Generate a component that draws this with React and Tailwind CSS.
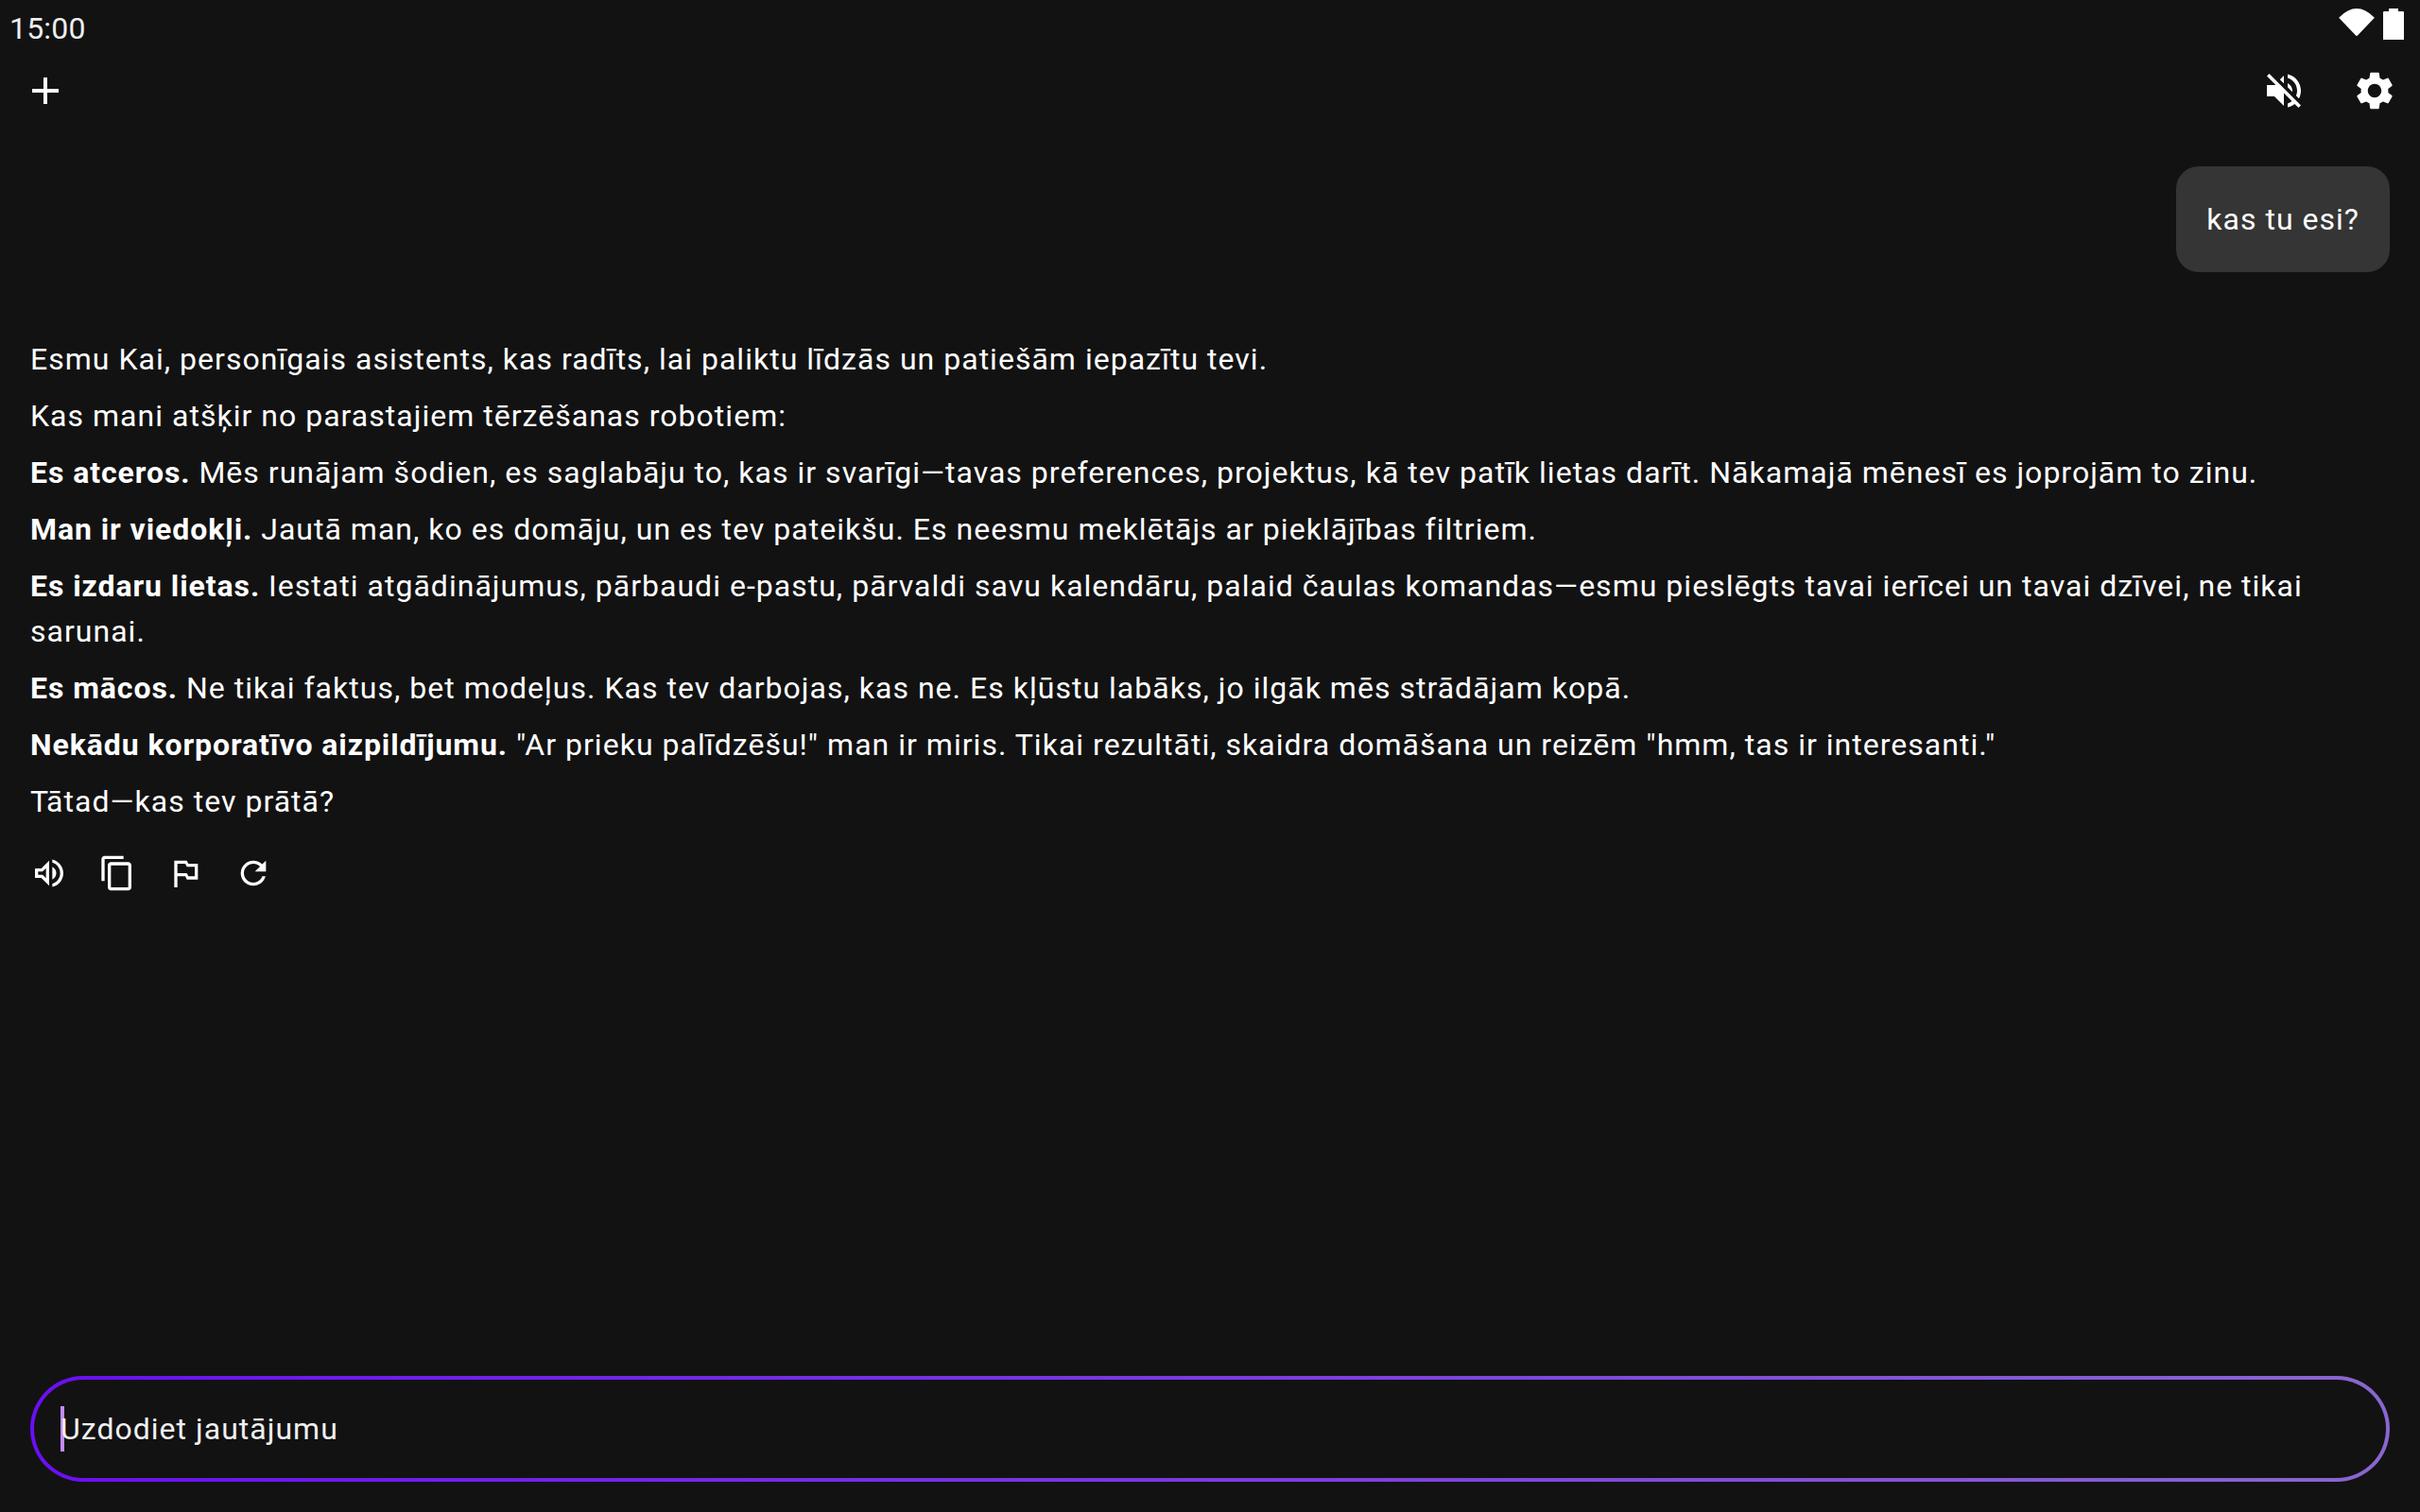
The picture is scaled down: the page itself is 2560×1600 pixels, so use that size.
import React from "react";

const Icon = ({ d, className = "w-12 h-12" }) => (
  <svg viewBox="0 0 24 24" fill="currentColor" className={className}>
    <path d={d} />
  </svg>
);

const paths = {
  add: "M19 13h-6v6h-2v-6H5v-2h6V5h2v6h6v2z",
  muted: "M16.5 12c0-1.77-1.02-3.29-2.5-4.03v2.21l2.45 2.45c.03-.2.05-.41.05-.63zm2.5 0c0 .94-.2 1.82-.54 2.64l1.51 1.51C20.63 14.91 21 13.5 21 12c0-4.28-2.99-7.86-7-8.77v2.06c2.89.86 5 3.54 5 6.71zM4.27 3L3 4.27 7.73 9H3v6h4l5 5v-6.73l4.25 4.25c-.67.52-1.42.93-2.25 1.18v2.06c1.38-.31 2.63-.95 3.69-1.81L19.73 21 21 19.73l-9-9L4.27 3zM12 4L9.91 6.09 12 8.18V4z",
  settings: "M19.14 12.94c.04-.3.06-.61.06-.94 0-.32-.02-.64-.07-.94l2.03-1.58c.18-.14.23-.41.12-.61l-1.92-3.32c-.12-.22-.37-.29-.59-.22l-2.39.96c-.5-.38-1.03-.7-1.62-.94l-.36-2.54c-.04-.24-.24-.41-.48-.41h-3.84c-.24 0-.43.17-.47.41l-.36 2.54c-.59.24-1.13.57-1.62.94l-2.39-.96c-.22-.08-.47 0-.59.22L2.74 8.87c-.12.21-.08.47.12.61l2.03 1.58c-.05.3-.09.63-.09.94s.02.64.07.94l-2.03 1.58c-.18.14-.23.41-.12.61l1.92 3.32c.12.22.37.29.59.22l2.39-.96c.5.38 1.03.7 1.62.94l.36 2.54c.05.24.24.41.48.41h3.84c.24 0 .44-.17.47-.41l.36-2.54c.59-.24 1.13-.56 1.62-.94l2.39.96c.22.08.47 0 .59-.22l1.92-3.32c.12-.22.07-.47-.12-.61l-2.01-1.58zM12 15.6c-1.98 0-3.6-1.62-3.6-3.6s1.62-3.6 3.6-3.6 3.6 1.62 3.6 3.6-1.62 3.6-3.6 3.6z",
  volume: "M3 9v6h4l5 5V4L7 9H3zm7-.17v6.34L7.83 13H5v-2h2.83L10 8.83zM16.5 12c0-1.77-1.02-3.29-2.5-4.03v8.05c1.48-.73 2.5-2.25 2.5-4.02zM14 3.23v2.06c2.89.86 5 3.54 5 6.71s-2.11 5.85-5 6.71v2.06c4.01-.91 7-4.49 7-8.77 0-4.28-2.99-7.86-7-8.77z",
  copy: "M16 1H4c-1.1 0-2 .9-2 2v14h2V3h12V1zm3 4H8c-1.1 0-2 .9-2 2v14c0 1.1.9 2 2 2h11c1.1 0 2-.9 2-2V7c0-1.1-.9-2-2-2zm0 16H8V7h11v14z",
  flag: "M14 6l-1-2H5v17h2v-7h5l1 2h7V6h-6zm4 8h-4l-1-2H7V6h5l1 2h5v6z",
  refresh: "M17.65 6.35C16.2 4.9 14.21 4 12 4c-4.42 0-7.99 3.58-7.99 8s3.57 8 7.99 8c3.73 0 6.84-2.55 7.73-6h-2.08c-.82 2.33-3.04 4-5.65 4-3.31 0-6-2.69-6-6s2.69-6 6-6c1.66 0 3.14.69 4.22 1.78L13 11h7V4l-2.35 2.35z",
};

const StatusBar = () => (
  <div className="h-[72px] flex items-start justify-between pl-[10px] pr-[17px] pt-[9px]">
    <span className="text-[32px] leading-[42px] tracking-[0.2px] text-[#eeeeee]">15:00</span>
    <div className="flex items-start gap-2 text-white">
      <svg viewBox="0 0 40 31" fill="currentColor" className="w-[39px] h-[30px]">
        <path d="M0 10 Q19.5 -10 39 10 L21 29 Q19.5 31 18 29 Z" />
      </svg>
      <svg viewBox="0 0 22 33" fill="currentColor" className="w-[22px] h-[33px]">
        <path d="M6 0h10v3h5q1 0 1 1v29H0V4q0-1 1-1h5z" />
      </svg>
    </div>
  </div>
);

const messages = [
  { text: "Esmu Kai, personīgais asistents, kas radīts, lai paliktu līdzās un patiešām iepazītu tevi." },
  { text: "Kas mani atšķir no parastajiem tērzēšanas robotiem:" },
  { bold: "Es atceros.", text: " Mēs runājam šodien, es saglabāju to, kas ir svarīgi—tavas preferences, projektus, kā tev patīk lietas darīt. Nākamajā mēnesī es joprojām to zinu." },
  { bold: "Man ir viedokļi.", text: " Jautā man, ko es domāju, un es tev pateikšu. Es neesmu meklētājs ar pieklājības filtriem." },
  { bold: "Es izdaru lietas.", text: " Iestati atgādinājumus, pārbaudi e-pastu, pārvaldi savu kalendāru, palaid čaulas komandas—esmu pieslēgts tavai ierīcei un tavai dzīvei, ne tikai sarunai." },
  { bold: "Es mācos.", text: " Ne tikai faktus, bet modeļus. Kas tev darbojas, kas ne. Es kļūstu labāks, jo ilgāk mēs strādājam kopā." },
  { bold: "Nekādu korporatīvo aizpildījumu.", text: " \"Ar prieku palīdzēšu!\" man ir miris. Tikai rezultāti, skaidra domāšana un reizēm \"hmm, tas ir interesanti.\"" },
];

export default function App() {
  return (
    <div className="h-[1600px] flex flex-col bg-[#121212] text-white font-[Roboto,sans-serif] text-[32px] leading-[48px] tracking-[1.02px]">
      <StatusBar />

      {/* Top bar */}
      <div className="flex items-center justify-between px-6">
        <Icon d={paths.add} />
        <div className="flex items-center gap-12">
          <Icon d={paths.muted} />
          <Icon d={paths.settings} />
        </div>
      </div>

      {/* Chat */}
      <div className="flex-1 px-8">
        <div className="flex justify-end mt-14">
          <div className="px-8 py-8 rounded-3xl bg-[#353535]">kas tu esi?</div>
        </div>

        <div className="mt-[68px] flex flex-col gap-3">
          {messages.map((m, i) => (
            <p key={i}>
              {m.bold && <strong className="font-bold tracking-[0.92px]">{m.bold}</strong>}
              {m.text}
            </p>
          ))}
          {/* T + a-macron kerning is tighter in the reference */}
          <p><span className="tracking-[-2px]">T</span>ātad—kas tev prātā?</p>
        </div>

        <div className="mt-8 flex gap-8">
          <Icon d={paths.volume} className="w-10 h-10" />
          <Icon d={paths.copy} className="w-10 h-10" />
          <Icon d={paths.flag} className="w-10 h-10" />
          <Icon d={paths.refresh} className="w-10 h-10" />
        </div>
      </div>

      {/* Input */}
      <div className="px-8 pb-8">
        <div className="p-1 rounded-[56px] bg-[linear-gradient(to_right,#6a0ff2,#8a66d0)]">
          <div className="h-[104px] rounded-[52px] bg-[#121212] flex items-center pl-7">
            <span className="w-1 h-12 bg-[#c58af9]" />
            <span className="-ml-1 text-[#f0f0f0]">Uzdodiet jautājumu</span>
          </div>
        </div>
      </div>
    </div>
  );
}
